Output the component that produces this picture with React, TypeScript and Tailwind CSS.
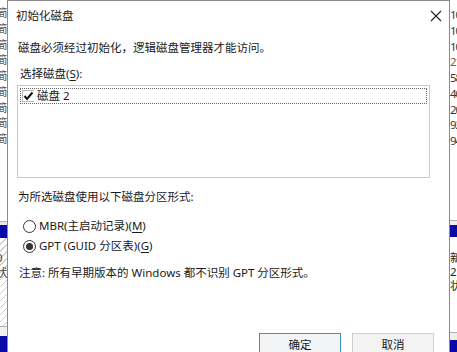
import React from 'react';

const font = { fontFamily: '"Noto Sans", "Noto Sans CJK SC", sans-serif' };

const leftRows = Array.from({ length: 9 });
const rightRows = ['10', '10', '10', '21', '58', '40', '20', '92', '94'];

function Radio({ checked }: { checked?: boolean }) {
  return (
    <span className="w-[13px] h-[13px] rounded-full border border-[#333] bg-white flex items-center justify-center shrink-0">
      {checked && <span className="w-[7px] h-[7px] rounded-full bg-[#333]" />}
    </span>
  );
}

export default function App() {
  return (
    <div className="w-[457px] h-[352px] overflow-hidden flex bg-white text-[11.5px] text-[#1a1a1a]" style={font}>
      {/* background window, left side */}
      <div className="w-[7px] shrink-0 overflow-hidden flex flex-col bg-white">
        <div className="h-[221px] pt-[5px] flex flex-col">
          {leftRows.map((_, i) => (
            <span key={i} className="h-[15.75px] leading-[15.75px] ml-[-4px] whitespace-nowrap text-[#555]">简</span>
          ))}
        </div>
        <div className="h-[1px] bg-[#b0b0b0]" />
        <div className="h-[3px] bg-[#e8e8e8]" />
        <div className="h-[13px] bg-[#0a0aa8]" />
        <div
          className="h-[88px] flex flex-col pt-[12px] text-[#444]"
          style={{ backgroundImage: 'repeating-linear-gradient(135deg, #ffffff 0px, #ffffff 4px, #cfcfcf 4px, #cfcfcf 5px)' }}
        >
          <span className="leading-[15px] ml-[-4px] whitespace-nowrap">0</span>
          <span className="leading-[15px] ml-[-4px] whitespace-nowrap">状</span>
        </div>
        <div className="h-[1px] bg-[#b0b0b0]" />
        <div className="h-[9px] bg-[#f0f0f0]" />
        <div className="flex-1 bg-[#0a0aa8]" />
      </div>

      {/* dialog */}
      <div className="w-[443px] shrink-0 h-full border-l border-r border-t border-[#8a8a8a] bg-white flex flex-col shadow-[2px_0_2px_rgba(0,0,0,0.2)]">
        <div className="h-[30px] shrink-0 flex items-center justify-between pl-[8px] pr-[6px]">
          <span className="leading-[16px] text-[#222]">初始化磁盘</span>
          <svg width="12" height="12" viewBox="0 0 12 12" className="mr-[1px]">
            <path d="M1 1 L11 11 M11 1 L1 11" stroke="#222" strokeWidth="1.1" />
          </svg>
        </div>

        <div className="flex flex-col pl-[10px]">
          <div className="mt-[9px] leading-[16px]">磁盘必须经过初始化，逻辑磁盘管理器才能访问。</div>
          <div className="mt-[10px] leading-[16px] pl-[2px]">
            选择磁盘(<span className="underline underline-offset-2">S</span>):
          </div>
          <div className="mt-[3px] ml-[-1px] mr-[19px] h-[93px] border border-[#c8c8c8] bg-white p-[2px]">
            <div className="h-[16px] border border-dotted border-[#666] flex items-center pl-[1px] gap-[2px]">
              <span className="w-[12px] h-[12px] border-l border-t border-b border-[#bbb] flex items-center justify-center">
                <svg width="11" height="10" viewBox="0 0 11 10">
                  <path d="M1.5 5 L4 8 L9.5 1.5" stroke="#111" strokeWidth="2" fill="none" />
                </svg>
              </span>
              <span className="leading-[14px] ml-[1px]">磁盘 2</span>
            </div>
          </div>

          <div className="mt-[11px] leading-[16px]">为所选磁盘使用以下磁盘分区形式:</div>
          <div className="mt-[13px] h-[16px] flex items-center gap-[3px] pl-[5px]">
            <Radio />
            <span className="leading-[16px]">
              MBR(主启动记录)(<span className="underline underline-offset-2">M</span>)
            </span>
          </div>
          <div className="mt-[4px] h-[16px] flex items-center gap-[3px] pl-[5px]">
            <Radio checked />
            <span className="leading-[16px]">
              GPT (GUID 分区表)(<span className="underline underline-offset-2">G</span>)
            </span>
          </div>
          <div className="mt-[11px] leading-[16px] pl-[1px]">注意: 所有早期版本的 Windows 都不识别 GPT 分区形式。</div>

          <div className="mt-[52px] flex justify-end gap-[11px] pr-[15px]">
            <button className="w-[82px] h-[24px] border border-[#3d95b8] bg-[#f2f4f5] flex items-center justify-center leading-[16px]">
              确定
            </button>
            <button className="w-[82px] h-[24px] border border-[#cfcfcf] bg-[#f3f3f3] flex items-center justify-center leading-[16px]">
              取消
            </button>
          </div>
        </div>
      </div>

      {/* background window, right side */}
      <div className="flex-1 overflow-hidden flex flex-col bg-white">
        <div className="h-[220px] pt-[7px] flex flex-col">
          {rightRows.map((n, i) => (
            <span key={i} className={`h-[15.75px] leading-[15.75px] whitespace-nowrap tracking-[-1px] ${i === 3 ? 'text-[#8a5a2a]' : 'text-[#333]'}`}>
              {n}
            </span>
          ))}
        </div>
        <div className="h-[1px] bg-[#b0b0b0]" />
        <div className="h-[4px] bg-[#eeeeee]" />
        <div className="h-[12px] bg-[#0a0aa8]" />
        <div className="h-[95px] flex flex-col pt-[14px] text-[#222]">
          <span className="h-[14px] leading-[14px] whitespace-nowrap">新</span>
          <span className="h-[14px] leading-[14px] whitespace-nowrap">2</span>
          <span className="h-[14px] leading-[14px] whitespace-nowrap">状</span>
        </div>
        <div className="h-[1px] bg-[#b0b0b0]" />
        <div className="h-[7px] bg-[#eeeeee]" />
        <div className="flex-1 bg-[#0a0aa8]" />
      </div>
    </div>
  );
}
